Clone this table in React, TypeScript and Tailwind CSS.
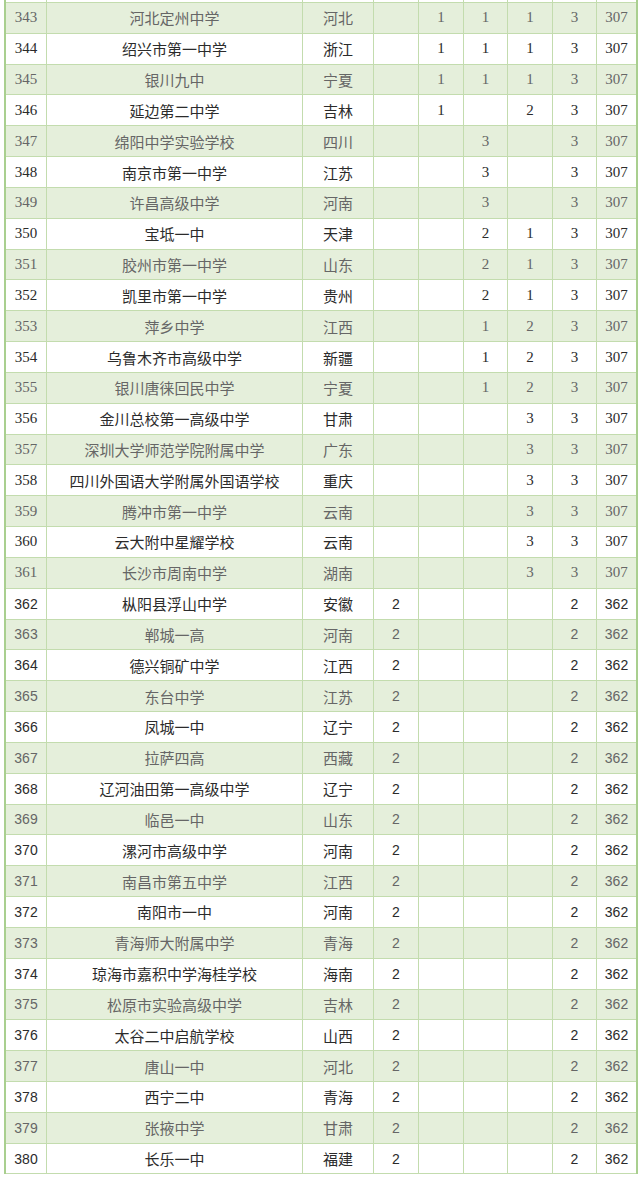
import React from "react";

type Row = [number, string, string, string, string, string, string, string, string];

const top: Row[] = [
  [343, "河北定州中学", "河北", "", "1", "1", "1", "3", "307"],
  [344, "绍兴市第一中学", "浙江", "", "1", "1", "1", "3", "307"],
  [345, "银川九中", "宁夏", "", "1", "1", "1", "3", "307"],
  [346, "延边第二中学", "吉林", "", "1", "", "2", "3", "307"],
  [347, "绵阳中学实验学校", "四川", "", "", "3", "", "3", "307"],
  [348, "南京市第一中学", "江苏", "", "", "3", "", "3", "307"],
  [349, "许昌高级中学", "河南", "", "", "3", "", "3", "307"],
  [350, "宝坻一中", "天津", "", "", "2", "1", "3", "307"],
  [351, "胶州市第一中学", "山东", "", "", "2", "1", "3", "307"],
  [352, "凯里市第一中学", "贵州", "", "", "2", "1", "3", "307"],
  [353, "萍乡中学", "江西", "", "", "1", "2", "3", "307"],
  [354, "乌鲁木齐市高级中学", "新疆", "", "", "1", "2", "3", "307"],
  [355, "银川唐徕回民中学", "宁夏", "", "", "1", "2", "3", "307"],
  [356, "金川总校第一高级中学", "甘肃", "", "", "", "3", "3", "307"],
  [357, "深圳大学师范学院附属中学", "广东", "", "", "", "3", "3", "307"],
  [358, "四川外国语大学附属外国语学校", "重庆", "", "", "", "3", "3", "307"],
  [359, "腾冲市第一中学", "云南", "", "", "", "3", "3", "307"],
  [360, "云大附中星耀学校", "云南", "", "", "", "3", "3", "307"],
  [361, "长沙市周南中学", "湖南", "", "", "", "3", "3", "307"],
];

const bottomNames: [string, string][] = [
  ["枞阳县浮山中学", "安徽"],
  ["郸城一高", "河南"],
  ["德兴铜矿中学", "江西"],
  ["东台中学", "江苏"],
  ["凤城一中", "辽宁"],
  ["拉萨四高", "西藏"],
  ["辽河油田第一高级中学", "辽宁"],
  ["临邑一中", "山东"],
  ["漯河市高级中学", "河南"],
  ["南昌市第五中学", "江西"],
  ["南阳市一中", "河南"],
  ["青海师大附属中学", "青海"],
  ["琼海市嘉积中学海桂学校", "海南"],
  ["松原市实验高级中学", "吉林"],
  ["太谷二中启航学校", "山西"],
  ["唐山一中", "河北"],
  ["西宁二中", "青海"],
  ["张掖中学", "甘肃"],
  ["长乐一中", "福建"],
];

const bottom: Row[] = bottomNames.map(([n, p], i) => [362 + i, n, p, "2", "", "", "", "2", "362"]);

const rows: Row[] = [...top, ...bottom];

const widths = ["w-[41px]", "w-[256px]", "w-[71px]", "w-[45px]", "w-[45px]", "w-[44px]", "w-[45px]", "w-[44px]", "w-[39px]"];

function TableRow({ r, idx }: { r: Row; idx: number }) {
  const green = idx % 2 === 0;
  const serif = r[0] < 362;
  const numFont = serif
    ? "font-['Liberation_Serif','Noto_Sans_CJK_SC',serif] text-[15px]"
    : "font-['Liberation_Sans','Noto_Sans_CJK_SC',sans-serif] text-[14px]";
  const color = green ? "text-[#666] bg-[#e5efdb]" : "text-[#2b2b2b] bg-white";
  return (
    <div className={`flex h-[30.84px] border-b border-[#c3dcae] ${color}`}>
      {r.map((v, i) => {
        const isText = i === 1 || i === 2;
        const font = isText
          ? "font-['Noto_Sans_CJK_SC',sans-serif] text-[15px]"
          : numFont;
        return (
          <div
            key={i}
            className={`${widths[i]} shrink-0 flex items-center justify-center leading-none whitespace-nowrap ${
              i < 8 ? "border-r border-[#c3dcae]" : ""
            } ${font}`}
          >
            {String(v)}
          </div>
        );
      })}
    </div>
  );
}

export default function App() {
  return (
    <div className="w-[640px] h-[1180px] overflow-hidden bg-white">
      <div className="ml-[4px] w-[634px] border-l-2 border-r-2 border-[#a9cf8f]">
        <div className="flex h-[3px] border-b border-[#c3dcae] bg-white">
          {widths.map((w, i) => (
            <div key={i} className={`${w} shrink-0 ${i < 8 ? "border-r border-[#c3dcae]" : ""}`} />
          ))}
        </div>
        {rows.map((r, idx) => (
          <TableRow key={r[0]} r={r} idx={idx} />
        ))}
      </div>
    </div>
  );
}
